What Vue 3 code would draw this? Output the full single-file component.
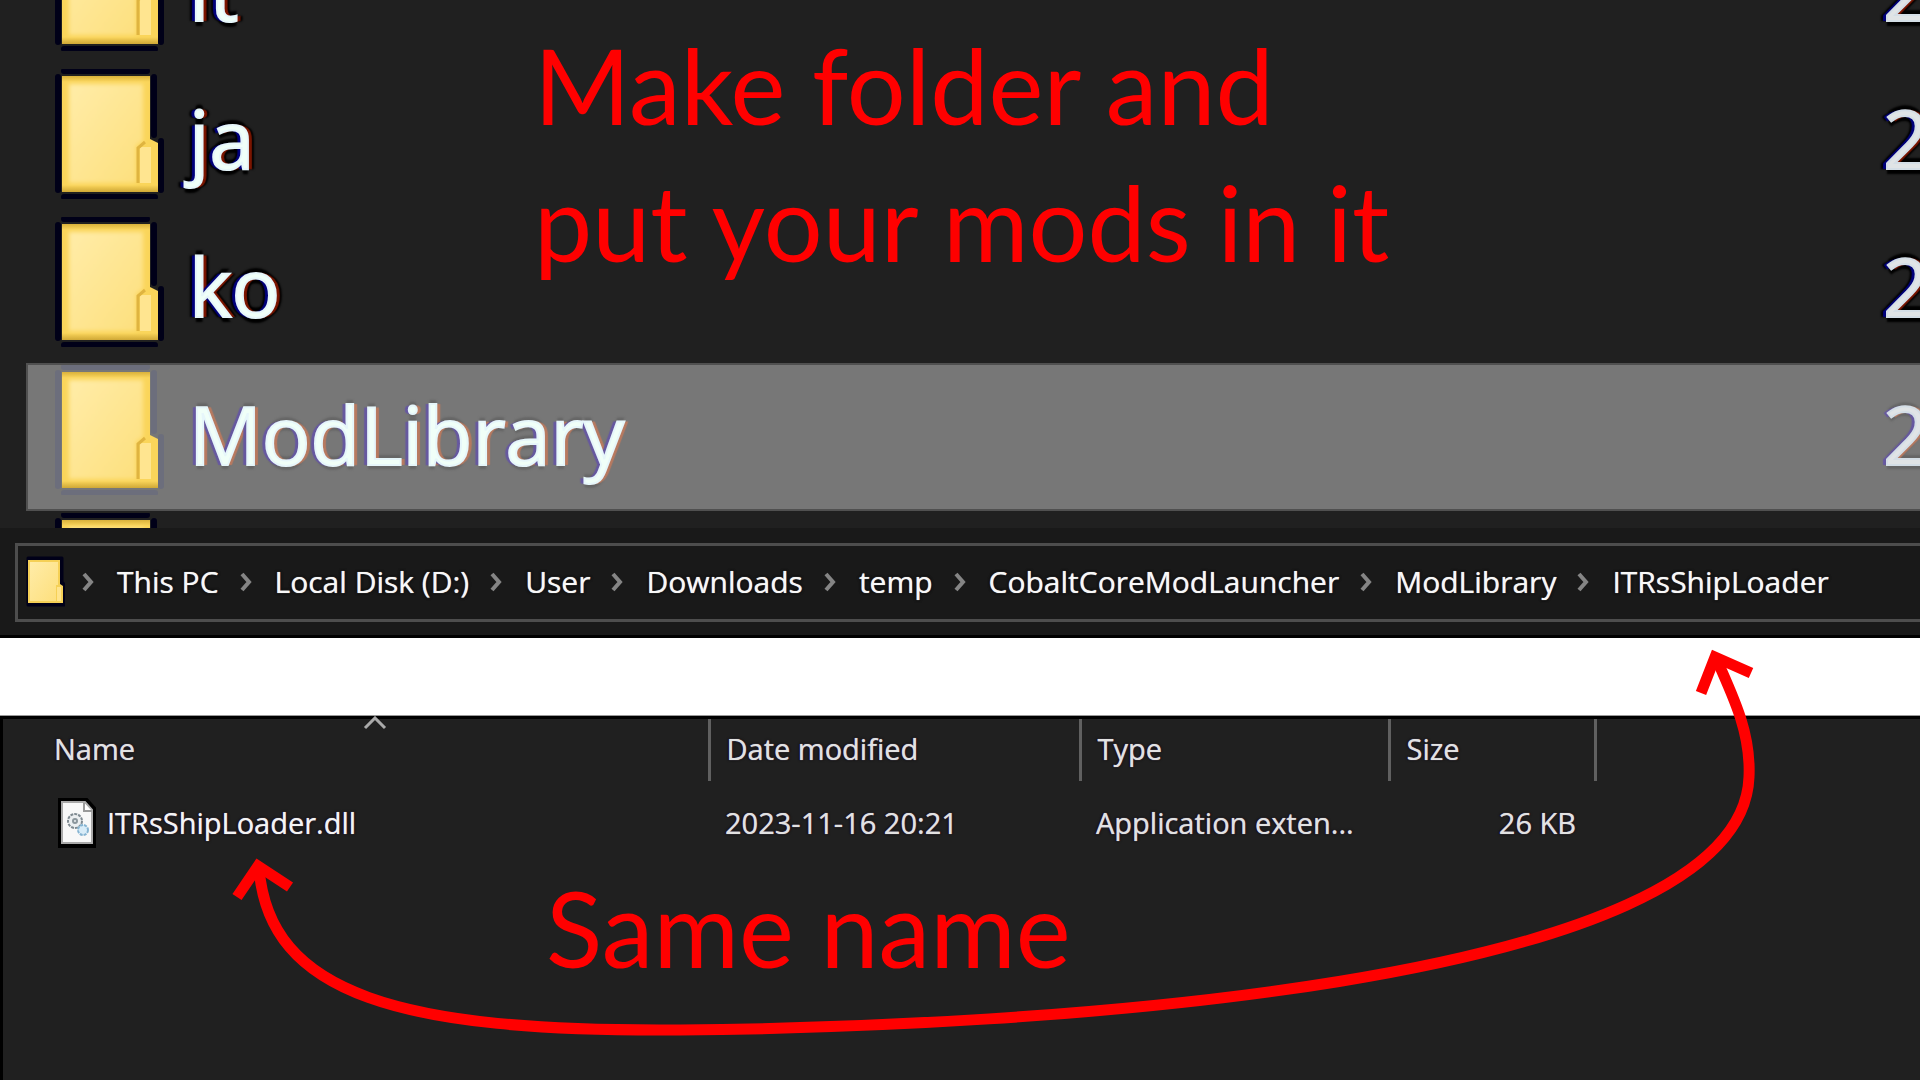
<script setup>
const folders = [
  { name: 'it', date: '2' },
  { name: 'ja', date: '2' },
  { name: 'ko', date: '2' },
  { name: 'ModLibrary', date: '2', selected: true },
  { name: '', date: '' },
]

const crumbs = [
  'This PC',
  'Local Disk (D:)',
  'User',
  'Downloads',
  'temp',
  'CobaltCoreModLauncher',
  'ModLibrary',
  'ITRsShipLoader',
]
</script>

<template>
  <main class="page">
    <svg class="defs" width="0" height="0" aria-hidden="true">
      <defs>
        <linearGradient id="folder-fill" x1="0" y1="0" x2="1" y2="1">
          <stop offset="0" stop-color="#ffeca8" />
          <stop offset="1" stop-color="#fddf7c" />
        </linearGradient>
        <linearGradient id="folder-edge" x1="0" y1="0" x2="0" y2="1">
          <stop offset="0" stop-color="#d9b13b" />
          <stop offset="0.05" stop-color="#fad55a" />
          <stop offset="0.94" stop-color="#fad55a" />
          <stop offset="1" stop-color="#cfa836" />
        </linearGradient>
        <filter id="soften" x="-10%" y="-10%" width="120%" height="120%">
          <feGaussianBlur stdDeviation="2" />
        </filter>
      </defs>
    </svg>

    <section class="folders">
      <ul class="folder-list">
        <li
          v-for="(folder, i) in folders"
          :key="i"
          class="folder-row"
          :class="{ selected: folder.selected }"
        >
          <svg class="folder-icon" viewBox="0 0 118 130" aria-hidden="true">
            <path
              class="outline"
              d="M6 8V121M109 72V121M102 8V66M12 2H95M12 128H103"
            />
            <path d="M10 7H98V70L106 74V123H10Z" fill="url(#folder-edge)" />
            <path
              d="M17 15H91V72L84 77V114H17Z"
              fill="url(#folder-fill)"
              filter="url(#soften)"
            />
            <path d="M88 78H99V114H88Z" fill="#ffe590" />
            <path
              d="M86 114V79L93 73"
              fill="none"
              stroke="#dfb440"
              stroke-width="3"
            />
          </svg>
          <span class="folder-name">{{ folder.name }}</span>
          <span class="folder-date">{{ folder.date }}</span>
        </li>
      </ul>
      <p class="note note-top">Make folder and<br />put your mods in it</p>
    </section>

    <section class="address">
      <nav class="address-bar" aria-label="Path">
        <svg class="path-icon" viewBox="0 0 39 51" aria-hidden="true">
          <path
            d="M2 2H36V26L38 28V49H2Z"
            fill="#000018"
            stroke="#000018"
            stroke-width="3"
            stroke-linejoin="round"
          />
          <path d="M2 4H34V28L37 30V47H2Z" fill="#f5d056" />
          <path d="M4 6H32V29H30V45H4Z" fill="url(#folder-fill)" />
          <path d="M31 31H35V45H31Z" fill="#ffe48c" />
        </svg>
        <template v-for="crumb in crumbs" :key="crumb">
          <svg class="chevron" viewBox="0 0 13 20" aria-hidden="true">
            <path d="M3 2L10 10L3 18" />
          </svg>
          <a class="crumb" href="#">{{ crumb }}</a>
        </template>
      </nav>
    </section>

    <section class="files">
      <table>
        <colgroup>
          <col class="col-name" />
          <col class="col-date" />
          <col class="col-type" />
          <col class="col-size" />
          <col />
        </colgroup>
        <thead>
          <tr>
            <th class="name-head" scope="col">
              Name
              <svg class="sort" viewBox="0 0 24 14" aria-hidden="true">
                <path d="M2 12L12 2L22 12" />
              </svg>
            </th>
            <th scope="col">Date modified</th>
            <th scope="col">Type</th>
            <th scope="col">Size</th>
            <td></td>
          </tr>
        </thead>
        <tbody>
          <tr>
            <td class="name-cell">
              <div class="file">
                <svg class="file-icon" viewBox="0 0 38 50" aria-hidden="true">
                  <path
                    d="M1 1H29L37 10V49H1Z"
                    fill="#000"
                    stroke="#000"
                    stroke-width="2"
                  />
                  <path
                    d="M4 4H27L34 12V45H4Z"
                    fill="#f8f8f8"
                    stroke="#a9a9a9"
                    stroke-width="2"
                  />
                  <path
                    d="M26 5V13H34"
                    fill="#fff"
                    stroke="#999"
                    stroke-width="2"
                  />
                  <circle
                    cx="17"
                    cy="23"
                    r="7"
                    fill="#eceff1"
                    stroke="#7f8a91"
                    stroke-width="2"
                    stroke-dasharray="3 1"
                  />
                  <circle
                    cx="17"
                    cy="23"
                    r="2"
                    fill="none"
                    stroke="#8b969c"
                    stroke-width="2"
                  />
                  <circle
                    cx="25"
                    cy="32"
                    r="5"
                    fill="#d8ecf8"
                    stroke="#86b4d2"
                    stroke-width="2"
                    stroke-dasharray="3 1"
                  />
                </svg>
                <span>ITRsShipLoader.dll</span>
              </div>
            </td>
            <td>2023-11-16 20:21</td>
            <td>Application exten...</td>
            <td class="size-cell">26 KB</td>
            <td></td>
          </tr>
        </tbody>
      </table>
      <p class="note note-bottom">Same name</p>
    </section>

    <svg class="arrow" viewBox="0 0 1920 1080" aria-hidden="true">
      <path
        d="M259 868C269 995 400 1032 680 1030C1020 1027 1741 988 1749 777C1751 735 1735 700 1716 658"
      />
      <path d="M237 897L258 866L290 887" />
      <path d="M1701 693L1715 657L1751 673" />
    </svg>
  </main>
</template>

<style>
body {
  margin: 0;
  background: #202020;
}
</style>

<style scoped>
.page {
  position: relative;
  display: flex;
  flex-direction: column;
  min-height: 100vh;
  overflow: hidden;
  background: #202020;
  color: #e4e4e4;
  font-family: "Open Sans", "Noto Sans", sans-serif;
}

.defs {
  position: absolute;
}

.folders {
  position: relative;
  height: 528px;
  overflow: hidden;
}

.folder-list {
  margin: -81px 0 0;
  padding: 0;
  list-style: none;
}

.folder-row {
  display: flex;
  align-items: center;
  box-sizing: border-box;
  height: 148px;
  margin-left: 26px;
  padding-left: 24px;
  border: 2px solid transparent;
  border-right: 0;
}

.folder-row.selected {
  background: #777;
  border-color: #505050;
}

.folder-icon {
  flex: none;
  align-self: flex-start;
  width: 118px;
  height: 130px;
}

.outline {
  fill: none;
  stroke: #000018;
  stroke-width: 6;
  stroke-linecap: round;
}

.selected .outline {
  stroke: #6c6e7c;
}

.folder-name,
.folder-date {
  padding-bottom: 6px;
  font-size: 81px;
  line-height: 108px;
  white-space: nowrap;
  color: #f0fff8;
  -webkit-text-stroke: 2px #e6f6fa;
  text-shadow: -4px 0 1px #00007c, 4px 0 1px #7c1600, 0 -5px 2px #000,
    0 5px 2px #000, -6px 0 2px #000, 6px 0 2px #000;
}

.folder-name {
  flex: 1;
  padding-left: 19px;
}

.folder-date {
  flex: none;
  width: 37px;
  color: #e0e4e6;
  -webkit-text-stroke-color: #d4dee6;
}

.selected span {
  text-shadow: -4px 0 1px #6658a0, 4px 0 1px #b87a60, 0 4px 2px #666,
    0 -4px 2px #666;
}

.note {
  position: absolute;
  margin: 0;
  color: #f00;
  font-family: Lato, sans-serif;
  font-size: 104px;
  line-height: 137px;
  white-space: nowrap;
}

.note-top {
  left: 534px;
  top: 16px;
}

.note-bottom {
  left: 543px;
  top: 140px;
}

.address {
  padding: 15px 0 13px 15px;
  background: #191919;
  border-bottom: 3px solid #000;
}

.address-bar {
  display: flex;
  align-items: center;
  box-sizing: border-box;
  height: 79px;
  padding: 0 0 2px 8px;
  border: 3px solid #4d4d4d;
  border-right: 0;
}

.path-icon {
  flex: none;
  width: 39px;
  height: 51px;
  margin-right: 16px;
}

.chevron {
  flex: none;
  width: 13px;
  height: 20px;
  fill: none;
  stroke: #858585;
  stroke-width: 4;
}

.crumb {
  margin: 0 20px 0 23px;
  color: #f8f8f8;
  font-size: 30px;
  line-height: 40px;
  text-decoration: none;
  white-space: nowrap;
  text-shadow: 0 0 1px #ddd, 0 0 3px #000, 0 0 3px #000;
}

.files {
  position: relative;
  flex: 1;
  margin-top: 78px;
  border-top: 3px solid #000;
  border-left: 3px solid #000;
}

.files::before {
  content: "";
  position: absolute;
  left: -3px;
  right: 0;
  top: -81px;
  height: 78px;
  background: #fff;
  border-bottom: 1px solid #999;
  box-sizing: border-box;
}

table {
  width: 100%;
  border-collapse: collapse;
  table-layout: fixed;
  color: #e2e2e2;
  font-size: 29px;
  line-height: 40px;
  text-shadow: 0 0 1px #bcc8cc, -1px 0 1px #004, 1px 0 1px #410, 0 0 3px #000;
}

.col-name {
  width: 706px;
}

.col-date {
  width: 371px;
}

.col-type {
  width: 309px;
}

.col-size {
  width: 206px;
}

th,
td {
  height: 62px;
  padding: 0 0 3px 16px;
  box-sizing: border-box;
  font-weight: 400;
  text-align: left;
  white-space: nowrap;
}

th {
  border-right: 3px solid #606060;
}

.name-head {
  position: relative;
  padding-left: 51px;
}

.sort {
  position: absolute;
  left: 360px;
  top: -3px;
  width: 24px;
  height: 14px;
  fill: none;
  stroke: #aaa;
  stroke-width: 3;
}

tbody td {
  height: 86px;
}

.name-cell {
  padding-left: 55px;
  color: #f4f4f4;
}

.file {
  display: flex;
  align-items: center;
  gap: 11px;
}

.file-icon {
  flex: none;
  width: 38px;
  height: 50px;
}

.size-cell {
  padding-right: 19px;
  text-align: right;
}

.arrow {
  position: absolute;
  left: 0;
  top: 0;
  width: 100%;
  pointer-events: none;
  fill: none;
  stroke: #f00;
  stroke-width: 11;
}
</style>
